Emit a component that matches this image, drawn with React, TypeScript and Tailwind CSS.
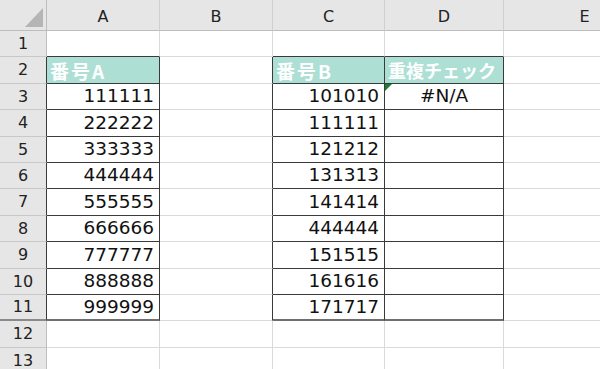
import React from "react";

const COLS = ["A", "B", "C", "D", "E"];
const ROWS = [1, 2, 3, 4, 5, 6, 7, 8, 9, 10, 11, 12, 13];

const listA = ["111111", "222222", "333333", "444444", "555555", "666666", "777777", "888888", "999999"];
const listB = ["101010", "111111", "121212", "131313", "141414", "444444", "151515", "161616", "171717"];

type Cell = {text?: string; head?: boolean; align?: "right" | "center"; flag?: boolean};

const cellAt = (row: number, col: string): Cell | null => {
    if (row === 2) {
        if (col === "A") return {text: "番号A", head: true};
        if (col === "C") return {text: "番号B", head: true};
        if (col === "D") return {text: "重複チェック", head: true};
    }
    if (row >= 3 && row <= 11) {
        if (col === "A") return {text: listA[row - 3], align: "right"};
        if (col === "C") return {text: listB[row - 3], align: "right"};
        if (col === "D") return row === 3 ? {text: "#N/A", align: "center", flag: true} : {};
    }
    return null;
};

const inTable = (row: number, col: string) => cellAt(row, col) !== null;
const nextCol = (col: string) => COLS[COLS.indexOf(col) + 1] ?? "";

const GridCell: React.FC<{row: number; col: string}> = ({row, col}) => {
    const cell = cellAt(row, col);
    const darkRight = inTable(row, col) || inTable(row, nextCol(col));
    const darkBottom = inTable(row, col) || inTable(row + 1, col);
    const thickBottom = row === 11 && inTable(row, col);
    const isCode = cell?.text?.startsWith("番号");
    return (
        <div
            className={[
                "relative flex items-center border-r border-b",
                darkRight ? "border-r-[#3a3a3a]" : "border-r-[#dadada]",
                thickBottom ? "border-b-2 border-b-[#6e6e6e]" : darkBottom ? "border-b-[#3a3a3a]" : "border-b-[#dadada]",
                cell?.head ? "bg-[#addfd5]" : "bg-white",
                cell?.align === "right" ? "justify-end pr-[5px]" : cell?.align === "center" ? "justify-center" : "justify-start pl-[3px]",
            ].join(" ")}
        >
            {cell?.flag && (
                <svg className="absolute left-0 top-0" width="7" height="7" viewBox="0 0 7 7">
                    <polygon points="0,0 7,0 0,7" fill="#1d7b34" />
                </svg>
            )}
            {cell?.text && cell.head && (
                <span
                    className={[
                        "font-['Noto_Sans_CJK_JP','Noto_Sans',sans-serif] text-white font-bold leading-none whitespace-nowrap",
                        isCode ? "text-[19px] tracking-[2px]" : "text-[18px]",
                    ].join(" ")}
                >
                    {cell.text}
                </span>
            )}
            {cell?.text && !cell.head && (
                <span className="font-['DejaVu_Sans',Verdana,sans-serif] text-[18.5px] leading-none text-[#111]">
                    {cell.text}
                </span>
            )}
        </div>
    );
};

export default function App() {
    return (
        <div
            className="grid w-[600px] h-[369px] overflow-hidden bg-white select-none font-['DejaVu_Sans',Verdana,sans-serif] grid-cols-[47px_113px_113px_112px_119px_162px] grid-rows-[31px_26px_27px_26px_27px_26px_26px_27px_26px_27px_26px_26px_27px_26px]"
        >
            {/* corner + column headers */}
            <div className="relative bg-[#e6e6e6] border-r border-b border-r-[#bdbdbd] border-b-[#bdbdbd]">
                <svg className="absolute left-[24px] top-[7px]" width="20" height="21" viewBox="0 0 20 21">
                    <polygon points="1,20 19,20 19,1" fill="#b5b5b5" />
                </svg>
            </div>
            {COLS.map(c => (
                <div
                    key={c}
                    className="flex items-center justify-center pt-[4px] bg-[#e6e6e6] border-r border-b border-r-[#d0d0d0] border-b-[#bdbdbd] text-[16px] text-[#222]"
                >
                    {c}
                </div>
            ))}

            {ROWS.map(row => {
                const tableRow = row >= 2 && row <= 11;
                return (
                    <React.Fragment key={row}>
                        <div
                            className={[
                                "flex items-center justify-center bg-[#e6e6e6] border-r text-[16px] text-[#222]",
                                tableRow ? "border-r-[#3a3a3a]" : "border-r-[#bdbdbd]",
                                row === 11 ? "border-b-2 border-b-[#8a8a8a]" : "border-b border-b-[#c8c8c8]",
                            ].join(" ")}
                        >
                            {row}
                        </div>
                        {COLS.map(c => (
                            <GridCell key={c} row={row} col={c} />
                        ))}
                    </React.Fragment>
                );
            })}
        </div>
    );
}
